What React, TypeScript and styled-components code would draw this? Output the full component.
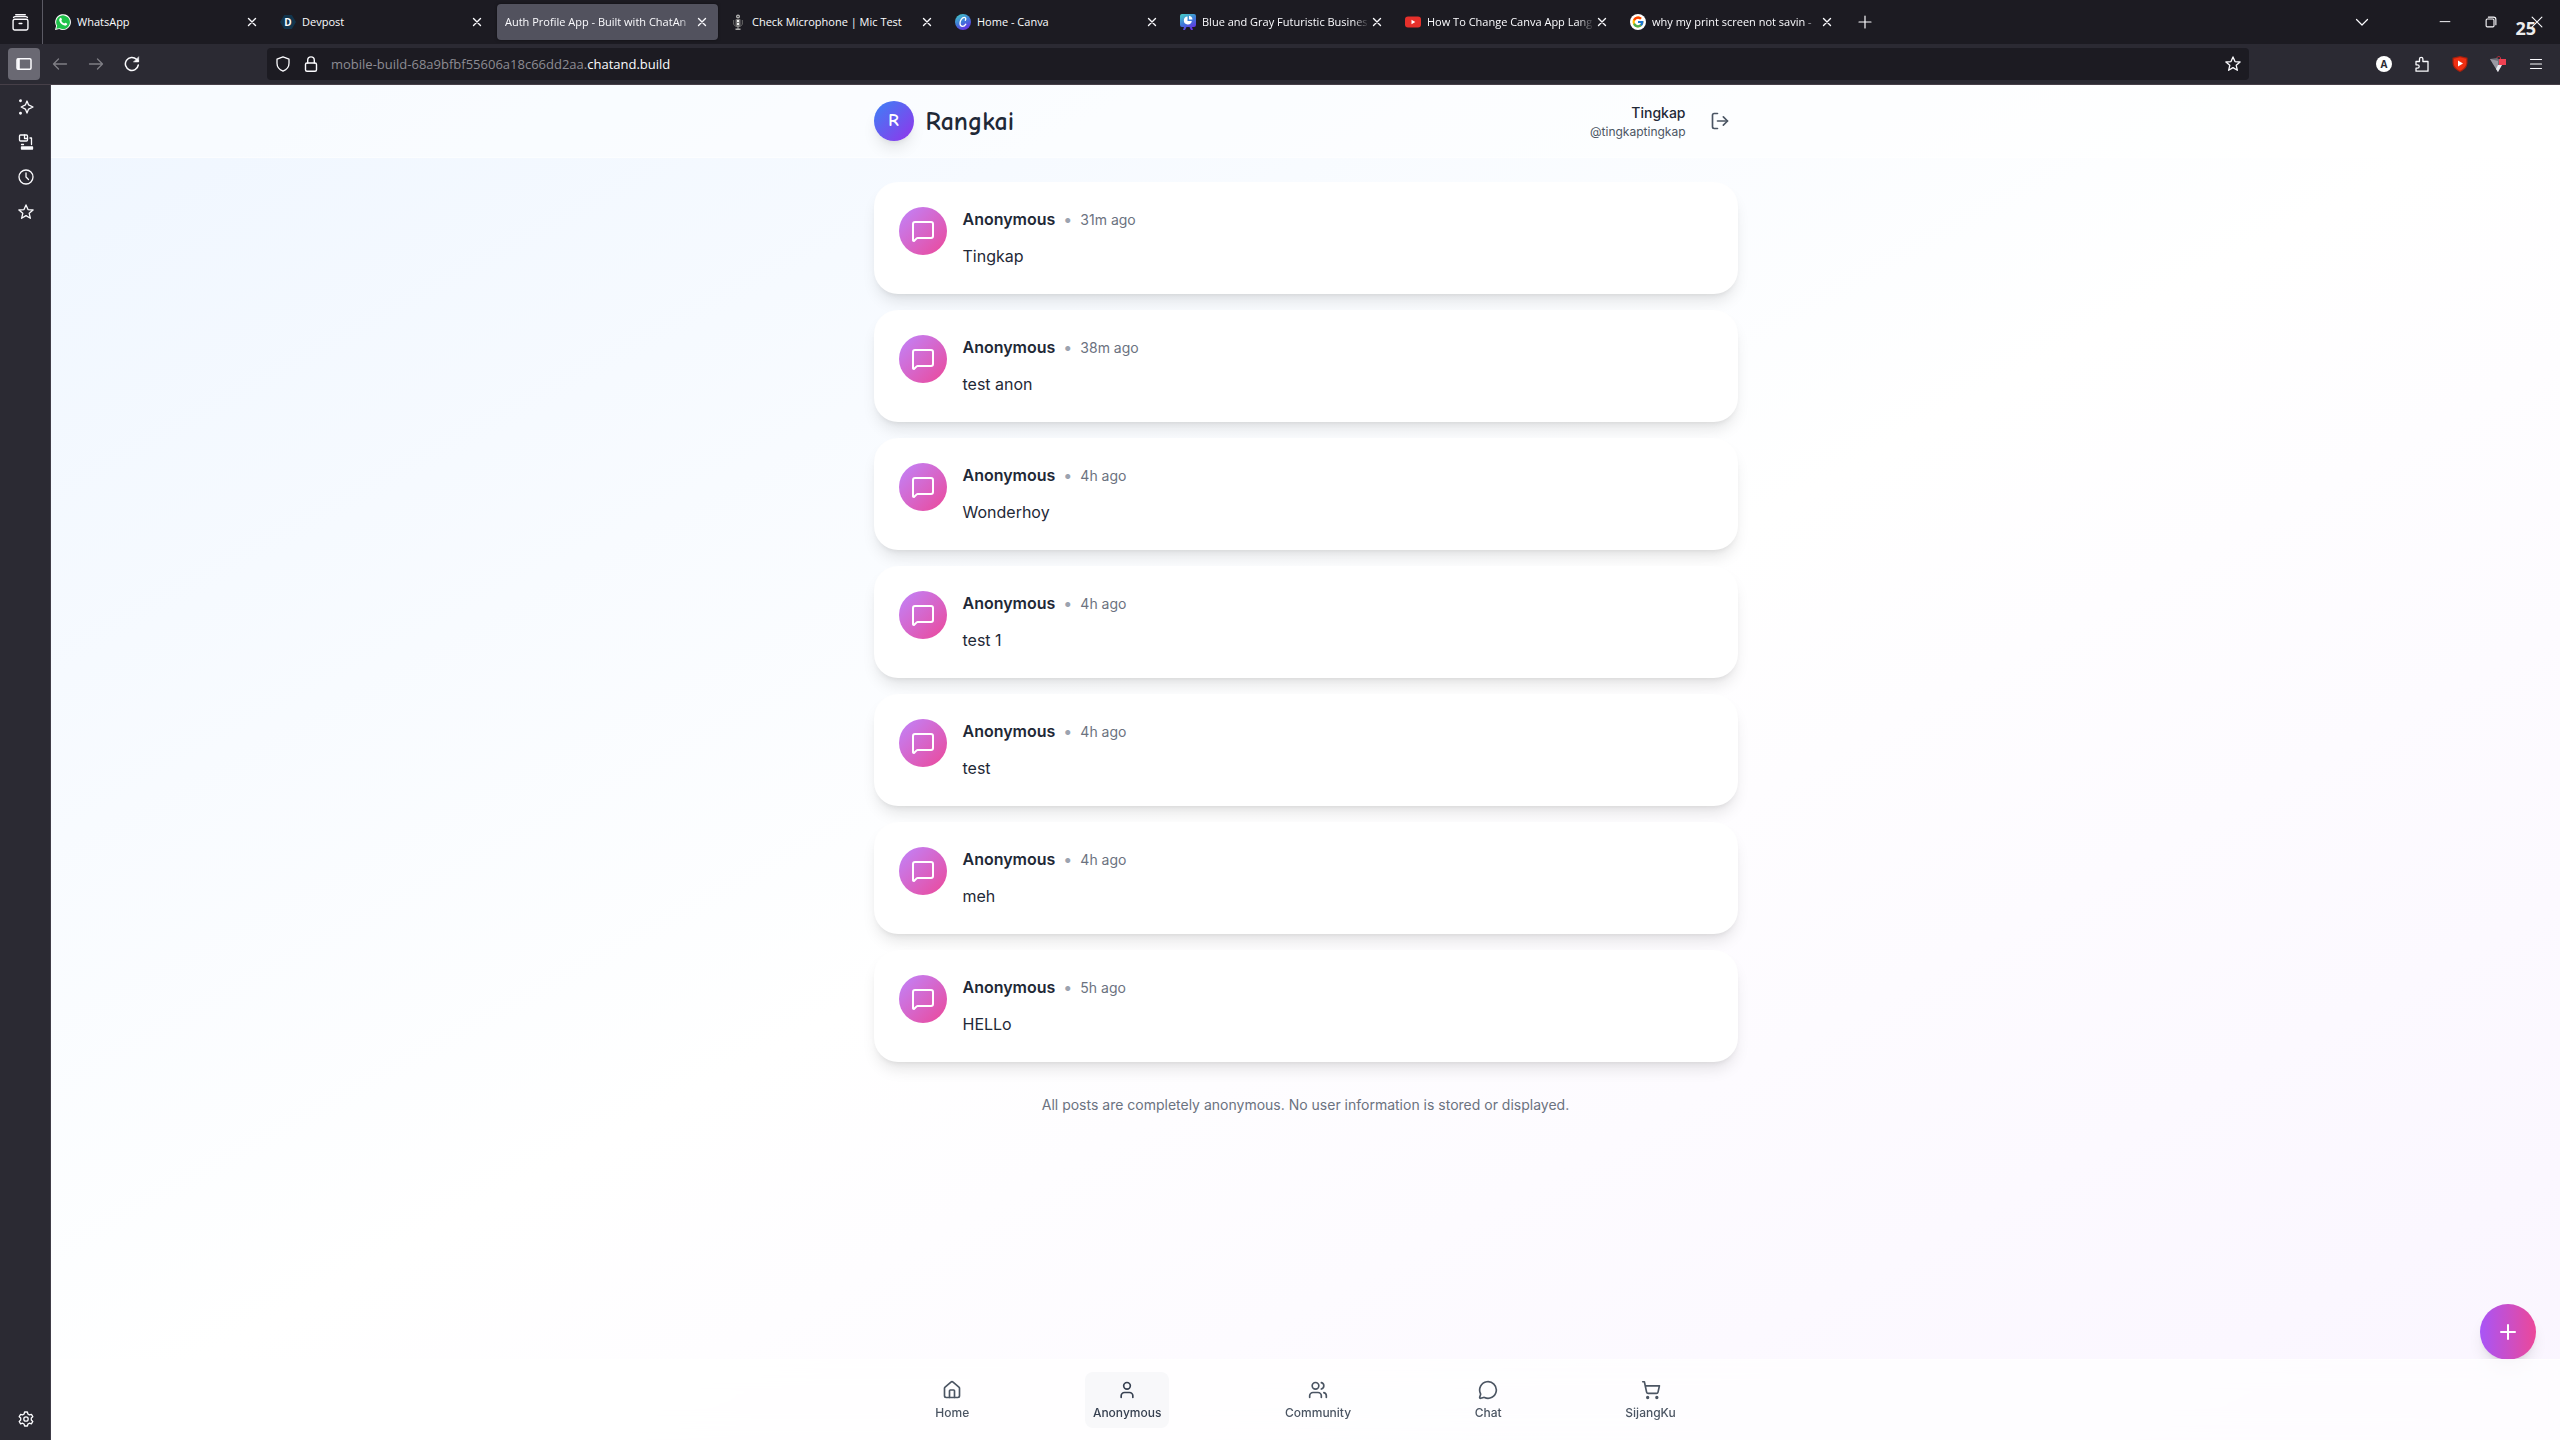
import React from "react";
import styled, { createGlobalStyle, css } from "styled-components";
import {
  House,
  LogOut,
  MessageCircle,
  MessageSquare,
  Plus,
  ShoppingCart,
  User,
  Users,
  type LucideIcon,
} from "lucide-react";
import { FcGoogle } from "react-icons/fc";

const GlobalStyle = createGlobalStyle`
  *, *::before, *::after { box-sizing: border-box; }
  body { margin: 0; }
  button, input { font: inherit; color: inherit; }
  button { border: 0; padding: 0; background: none; cursor: pointer; }
  a { color: inherit; text-decoration: none; }
  h1, p { margin: 0; }
  svg { display: block; flex: none; }
`;

const chromeFont = `"Segoe UI", "Open Sans", "Noto Sans", sans-serif`;
const pageFont = `Inter, Roboto, sans-serif`;
const logoFont = `"Comic Sans MS", "Comic Neue", Lato, sans-serif`;

/* ---------- browser window ---------- */

const Window = styled.div`
  height: 100vh;
  display: flex;
  flex-direction: column;
  overflow: hidden;
  font-family: ${chromeFont};
  color: #fbfbfe;
`;

const TabBar = styled.header`
  position: relative;
  flex: none;
  display: flex;
  align-items: center;
  height: 44px;
  background: #1c1b22;
`;

const ViewButton = styled.button`
  width: 40px;
  height: 44px;
  display: grid;
  place-items: center;
`;

const Divider = styled.span`
  width: 1px;
  height: 44px;
  margin: 0 4px 0 2px;
  background: #5b5a64;
`;

const TabList = styled.div`
  flex: 0 1 auto;
  min-width: 0;
  display: flex;
  gap: 4px;
`;

const TabItem = styled.div<{ $active?: boolean }>`
  flex: 0 1 221px;
  width: 221px;
  min-width: 0;
  height: 36px;
  padding: 0 8px;
  display: flex;
  align-items: center;
  border-radius: 4px;
  ${(p) =>
    p.$active &&
    css`
      background: #52525e;
      box-shadow: 0 0 3px rgba(0, 0, 0, 0.5);
    `}
`;

const TabLabel = styled.button<{ $fade?: boolean }>`
  flex: 1;
  min-width: 0;
  height: 36px;
  display: flex;
  align-items: center;
  gap: 6px;
  overflow: hidden;
  font-size: 11px;
  line-height: 16px;
  white-space: nowrap;
  ${(p) =>
    p.$fade &&
    css`
      mask-image: linear-gradient(to left, transparent, #000 16px);
    `}
`;

const TabClose = styled.button`
  width: 16px;
  height: 16px;
  display: grid;
  place-items: center;
`;

const NewTab = styled.button`
  width: 32px;
  height: 32px;
  margin-left: 6px;
  display: grid;
  place-items: center;
`;

const WindowControls = styled.div`
  margin-left: auto;
  display: flex;
  align-items: center;
`;

const WindowButton = styled.button<{ $gap?: boolean }>`
  width: 46px;
  height: 44px;
  margin-right: ${(p) => (p.$gap ? 37 : 0)}px;
  display: grid;
  place-items: center;
`;

const FrameCounter = styled.span`
  position: absolute;
  right: 24px;
  top: 16px;
  font: 700 18px/24px "Open Sans", sans-serif;
  color: #ececec;
  pointer-events: none;
`;

const Toolbar = styled.div`
  flex: none;
  display: flex;
  align-items: center;
  height: 41px;
  padding: 0 6px 0 8px;
  background: #2b2a33;
  border-bottom: 1px solid #463f48;
`;

const ToolButton = styled.button<{ $on?: boolean; $dim?: boolean }>`
  width: ${(p) => (p.$on ? 32 : 36)}px;
  height: 32px;
  margin-right: ${(p) => (p.$on ? 2 : 0)}px;
  display: grid;
  place-items: center;
  border-radius: 4px;
  background: ${(p) => (p.$on ? "#6a6973" : "none")};
  opacity: ${(p) => (p.$dim ? 0.4 : 1)};
`;

const UrlBar = styled.form`
  position: relative;
  flex: 1;
  min-width: 0;
  height: 32px;
  margin: 0 117px;
  padding: 0 8px;
  display: flex;
  align-items: center;
  gap: 12px;
  border-radius: 4px;
  background: #1c1b22;
`;

const UrlText = styled.span`
  flex: 1;
  min-width: 0;
  overflow: hidden;
  white-space: nowrap;
  font-size: 13px;
  line-height: 20px;
  color: #8d8c93;
`;

const UrlHost = styled.span`
  color: #fbfbfe;
`;

const UrlInput = styled.input`
  position: absolute;
  inset: 0 40px 0 64px;
  border: 0;
  outline: 0;
  background: transparent;
`;

const Extensions = styled.div`
  display: flex;
  gap: 2px;
`;

const Body = styled.div`
  flex: 1;
  min-height: 0;
  display: flex;
`;

const SideBar = styled.aside`
  flex: none;
  width: 51px;
  padding: 4px 6px 4px 8px;
  display: flex;
  flex-direction: column;
  align-items: center;
  background: #2b2a33;
  border-right: 1px solid #403d48;
`;

const SideButton = styled.button<{ $last?: boolean }>`
  width: 36px;
  height: 35px;
  display: grid;
  place-items: center;
  margin-top: ${(p) => (p.$last ? "auto" : 0)};
`;

/* ---------- page ---------- */

const Page = styled.div`
  position: relative;
  flex: 1;
  min-width: 0;
  display: flex;
  flex-direction: column;
  background: linear-gradient(to bottom right, #eff6ff, #ffffff, #faf5ff);
  font-family: ${pageFont};
  color: #1f2937;
`;

const PageHeader = styled.header`
  flex: none;
  background: rgba(255, 255, 255, 0.5);
  border-bottom: 1px solid rgba(255, 255, 255, 0.5);
`;

const HeaderInner = styled.div`
  max-width: 896px;
  margin: 0 auto;
  padding: 16px;
  display: flex;
  align-items: center;
  justify-content: space-between;
`;

const Brand = styled.div`
  height: 40px;
  display: flex;
  align-items: center;
  gap: 12px;
  font-family: ${logoFont};
  font-weight: 700;
`;

const BrandMark = styled.span`
  width: 40px;
  height: 40px;
  display: grid;
  place-items: center;
  border-radius: 50%;
  background: linear-gradient(to bottom right, #3b82f6, #9333ea);
  box-shadow: 0 10px 15px -3px rgba(0, 0, 0, 0.1), 0 4px 6px -4px rgba(0, 0, 0, 0.1);
  color: #fff;
  font-size: 18px;
  line-height: 28px;
`;

const BrandName = styled.h1`
  padding-top: 2px;
  font-size: 26px;
  line-height: 32px;
  font-weight: 700;
`;

const Account = styled.div`
  height: 40px;
  display: flex;
  align-items: center;
  gap: 16px;
  text-align: right;
`;

const AccountName = styled.p`
  font-size: 14px;
  line-height: 22px;
  font-weight: 500;
`;

const AccountHandle = styled.p`
  font-size: 12px;
  line-height: 16px;
  color: #4b5563;
`;

const LogoutButton = styled.button`
  width: 36px;
  height: 36px;
  display: grid;
  place-items: center;
  color: #4b5563;
`;

const Main = styled.main`
  flex: 1;
  min-height: 0;
  width: 100%;
  max-width: 896px;
  margin: 0 auto;
  padding: 24px 16px;
`;

const Posts = styled.div`
  display: flex;
  flex-direction: column;
  gap: 16px;
`;

const Card = styled.article`
  display: flex;
  gap: 16px;
  padding: 24px;
  border: 1px solid rgba(255, 255, 255, 0.5);
  border-radius: 24px;
  background: #fff;
  box-shadow: 0 10px 15px -3px rgba(0, 0, 0, 0.1), 0 4px 6px -4px rgba(0, 0, 0, 0.1);
`;

const PostIcon = styled.span`
  flex: none;
  width: 48px;
  height: 48px;
  display: grid;
  place-items: center;
  border-radius: 50%;
  background: linear-gradient(to bottom right, #c084fc, #ec4899);
  color: #fff;
`;

const PostMeta = styled.div`
  display: flex;
  align-items: baseline;
  gap: 8px;
  margin-bottom: 12px;
  font-size: 16px;
  line-height: 24px;
`;

const Author = styled.span`
  font-weight: 600;
`;

const Dot = styled.span`
  color: #9ca3af;
`;

const PostAge = styled.span`
  font-size: 14px;
  line-height: 20px;
  color: #6b7280;
`;

const PostBody = styled.p`
  font-size: 16px;
  line-height: 26px;
`;

const Notice = styled.p`
  margin-top: 32px;
  text-align: center;
  font-size: 14px;
  line-height: 22px;
  color: #6b7280;
`;

const AddButton = styled.button`
  position: absolute;
  right: 24px;
  bottom: 80px;
  width: 56px;
  height: 56px;
  display: grid;
  place-items: center;
  border-radius: 50%;
  background: linear-gradient(to right, #a855f7, #ec4899);
  box-shadow: 0 10px 15px -3px rgba(0, 0, 0, 0.1), 0 4px 6px -4px rgba(0, 0, 0, 0.1);
  color: #fff;
`;

const BottomNav = styled.nav`
  position: relative;
  z-index: 1;
  flex: none;
  background: rgba(255, 255, 255, 0.7);
  border-top: 1px solid rgba(255, 255, 255, 0.5);
  backdrop-filter: blur(12px);
`;

const NavInner = styled.div`
  max-width: 896px;
  margin: 0 auto;
  padding: 12px 16px;
  display: flex;
  justify-content: space-around;
`;

const NavLink = styled.a<{ $active?: boolean }>`
  display: flex;
  flex-direction: column;
  align-items: center;
  gap: 4px;
  padding: 8px 8px 6px;
  border-radius: 8px;
  font-size: 12px;
  line-height: 18px;
  font-weight: 500;
  color: ${(p) => (p.$active ? "#374151" : "#4b5563")};
  background: ${(p) => (p.$active ? "#f8f8fa" : "none")};
`;

/* ---------- drawings ---------- */

type GlyphProps = { size?: number; width?: number; children: React.ReactNode };

const Glyph = ({ size = 16, width = 1.3, children }: GlyphProps) => (
  <svg
    width={size}
    height={size}
    viewBox="0 0 16 16"
    fill="none"
    stroke="currentColor"
    strokeWidth={width}
    strokeLinecap="round"
    strokeLinejoin="round"
    aria-hidden="true"
  >
    {children}
  </svg>
);

const starPath =
  "M8 .9l2 4.7 5.1.4-3.9 3.3 1.2 5-4.4-2.7-4.4 2.7 1.2-5L.9 6 6 5.6z";

const CloseGlyph = () => (
  <Glyph width={1.4}>
    <path d="M4.5 4.5l7 7M11.5 4.5l-7 7" />
  </Glyph>
);

const WhatsAppLogo = () => (
  <svg width="16" height="16" viewBox="0 0 16 16" aria-hidden="true">
    <path d="M0 16l1.1-4.1A7.9 7.9 0 1 1 4.2 15z" fill="#fff" />
    <path d="M1.3 14.7l.8-2.9a6.9 6.9 0 1 1 2.6 2.5z" fill="#1fc24a" />
    <path
      d="M5.2 4c.4-.4.9-.3 1.1.1l.6 1.4c.1.3 0 .5-.6 1.2.7 1.4 1.6 2.2 3 2.8.7-.8.8-1 1.2-.8l1.5.7c.3.2.3.5.1 1.1-.5 1.1-1.7 1.3-2.7 1C6.9 10.8 5 8.900 4.400 7c-.4-1.200 0-2.300.8-3z"
      fill="#fff"
    />
  </svg>
);

const BadgeText = styled.text`
  font: 700 10px "Open Sans", sans-serif;
  text-anchor: middle;
`;

const DevpostLogo = () => (
  <svg width="16" height="16" viewBox="0 0 16 16" aria-hidden="true">
    <path d="M4.2 1h7.6L16 8l-4.2 7H4.2L0 8z" fill="#12354d" />
    <BadgeText x="8" y="11.6" fill="#fff">D</BadgeText>
  </svg>
);

const MicLogo = () => (
  <svg width="16" height="16" viewBox="0 0 16 16" aria-hidden="true">
    <circle cx="8" cy="2.5" r="2" fill="#b9b9b9" />
    <circle cx="8" cy="2.5" r=".8" fill="#333" />
    <path d="M3.7 6v4.500L6 12.500h4l2.300-2V6" fill="none" stroke="#6c6c6c" />
    <rect x="5.5" y="5" width="5" height="7" rx="1" fill="#777" />
    <path d="M7 6h2v2H7zM7 9h2v2H7z" fill="#eee" />
    <path d="M7.500 12h1v2.500h-1zM5.500 14.500h5V16h-5z" fill="#aaa" />
  </svg>
);

const CanvaGradient = ({ id }: { id: string }) => (
  <defs>
    <linearGradient id={id} x1="0.2" y1="0" x2="0.7" y2="1">
      <stop offset="0" stopColor="#45c6c8" />
      <stop offset="0.5" stopColor="#3f79d8" />
      <stop offset="1" stopColor="#6a2be4" />
    </linearGradient>
  </defs>
);

const CanvaLogo = () => (
  <svg width="16" height="16" viewBox="0 0 16 16" aria-hidden="true">
    <CanvaGradient id="canva-home" />
    <circle cx="8" cy="8" r="8" fill="url(#canva-home)" />
    <path
      d="M10.300 6.200c.9-1 .5-2.800-.9-2.800C7 3.400 5 6.600 5 9.300c0 1.900 1 3.100 2.500 3.100 1.500 0 2.600-1 3.300-2.200"
      fill="none"
      stroke="#fff"
      strokeWidth="1.3"
      strokeLinecap="round"
    />
  </svg>
);

const CanvaDeckLogo = () => (
  <svg width="16" height="16" viewBox="0 0 16 16" aria-hidden="true">
    <CanvaGradient id="canva-deck" />
    <path
      d="M2 0h12a2 2 0 0 1 2 2v9a2 2 0 0 1-2 2h-2l1 3h-2l-1.500-3h-3L5 16H3l1-3H2a2 2 0 0 1-2-2V2a2 2 0 0 1 2-2z"
      fill="url(#canva-deck)"
    />
    <path d="M7.500 2.500A4 4 0 1 0 11.800 7H7.500z" fill="#fff" />
    <path d="M9 1.800a4 4 0 0 1 3.500 3.700H9z" fill="#fff" />
  </svg>
);

const YouTubeLogo = () => (
  <svg width="16" height="16" viewBox="0 0 16 16" aria-hidden="true">
    <rect y="2.5" width="16" height="11" rx="3" fill="#e6302b" />
    <path d="M6.500 5.700v4.600L10.300 8z" fill="#fff" />
  </svg>
);

const GoogleLogo = () => (
  <svg width="16" height="16" viewBox="0 0 16 16" aria-hidden="true">
    <circle cx="8" cy="8" r="8" fill="#fff" />
    <FcGoogle x="1.5" y="1.5" size={13} />
  </svg>
);

const VideoShield = () => (
  <svg width="16" height="16" viewBox="0 0 16 16" aria-hidden="true">
    <path d="M8 0l7.500 1.800v4.700c0 4.500-3 7.500-7.500 9.500C3.500 14 .5 11 .5 6.500V1.800z" fill="#a8200d" />
    <path d="M8 1.200l6.300 1.500v3.800c0 3.800-2.500 6.400-6.300 8.200-3.800-1.800-6.300-4.400-6.300-8.200V2.700z" fill="#ee2f12" />
    <path d="M6 4.500v6L11 7.500z" fill="#fff" />
  </svg>
);

const LockedPrism = () => (
  <svg width="16" height="16" viewBox="0 0 16 16" aria-hidden="true">
    <path d="M0 3l7-1 6 4-5 10z" fill="#6f6e78" />
    <path d="M0 3l8 2 0 11z" fill="#9a99a3" />
    <path d="M8 9h4L8 16l-2-3z" fill="#e8e8ee" />
    <path d="M7 2c0-2 3.500-2 3.500 0v2" fill="none" stroke="#c7303e" />
    <rect x="9" y="3" width="7" height="6" fill="#ee4152" />
  </svg>
);

/* ---------- content ---------- */

type TabData = { title: string; icon?: React.ReactNode; active?: boolean; fade?: boolean };

const tabs: TabData[] = [
  { title: "WhatsApp", icon: <WhatsAppLogo /> },
  { title: "Devpost", icon: <DevpostLogo /> },
  { title: "Auth Profile App - Built with ChatAn", active: true, fade: true },
  { title: "Check Microphone | Mic Test", icon: <MicLogo /> },
  { title: "Home - Canva", icon: <CanvaLogo /> },
  { title: "Blue and Gray Futuristic Busines", icon: <CanvaDeckLogo />, fade: true },
  { title: "How To Change Canva App Lang", icon: <YouTubeLogo />, fade: true },
  { title: "why my print screen not savin -", icon: <GoogleLogo />, fade: true },
];

const posts = [
  { age: "31m ago", text: "Tingkap" },
  { age: "38m ago", text: "test anon" },
  { age: "4h ago", text: "Wonderhoy" },
  { age: "4h ago", text: "test 1" },
  { age: "4h ago", text: "test" },
  { age: "4h ago", text: "meh" },
  { age: "5h ago", text: "HELLo" },
];

const navItems: { label: string; Icon: LucideIcon; active?: boolean }[] = [
  { label: "Home", Icon: House },
  { label: "Anonymous", Icon: User, active: true },
  { label: "Community", Icon: Users },
  { label: "Chat", Icon: MessageCircle },
  { label: "SijangKu", Icon: ShoppingCart },
];

const Tabs = () => (
  <TabBar>
    <ViewButton aria-label="Recent browsing">
      <Glyph size={17}>
        <rect x="1" y="5" width="14" height="10" rx="1.5" />
        <path d="M1.500 3.200C2 2.500 2.500 2.500 3 2.500h10c.5 0 1 0 1.500.7M3.500.7h9M6.700 9h2.600" />
      </Glyph>
    </ViewButton>
    <Divider />
    <TabList>
      {tabs.map((tab) => (
        <TabItem key={tab.title} $active={tab.active}>
          <TabLabel $fade={tab.fade}>
            {tab.icon}
            {tab.title}
          </TabLabel>
          <TabClose aria-label={`Close ${tab.title}`}>
            <CloseGlyph />
          </TabClose>
        </TabItem>
      ))}
    </TabList>
    <NewTab aria-label="New tab">
      <Glyph width={1.2}>
        <path d="M8 2v12M2 8h12" />
      </Glyph>
    </NewTab>
    <WindowControls>
      <WindowButton $gap aria-label="List all tabs">
        <Glyph width={1.2}>
          <path d="M2.500 5.500L8 11l5.500-5.500" />
        </Glyph>
      </WindowButton>
      <WindowButton aria-label="Minimize">
        <Glyph size={12} width={1.3}>
          <path d="M1.500 7.500h13" />
        </Glyph>
      </WindowButton>
      <WindowButton aria-label="Restore">
        <Glyph size={12} width={1.5}>
          <rect x="1.5" y="4" width="10.5" height="10.5" rx="1.5" />
          <path d="M4.500 1.500h7c2 0 3 1 3 3v7" />
        </Glyph>
      </WindowButton>
      <WindowButton aria-label="Close window">
        <Glyph size={12} width={1.5}>
          <path d="M1.500 1.500l13 13M14.500 1.500l-13 13" />
        </Glyph>
      </WindowButton>
    </WindowControls>
    <FrameCounter>25</FrameCounter>
  </TabBar>
);

const NavigationBar = () => (
  <Toolbar>
    <ToolButton $on aria-label="Sidebar">
      <Glyph width={1.5}>
        <rect x="1" y="2.7" width="14" height="10.6" rx="1.2" />
        <path d="M2.500 3.500v9" strokeWidth="2.6" />
      </Glyph>
    </ToolButton>
    <ToolButton $dim aria-label="Back">
      <Glyph>
        <path d="M14.500 8h-13M6.500 3l-5 5 5 5" />
      </Glyph>
    </ToolButton>
    <ToolButton $dim aria-label="Forward">
      <Glyph>
        <path d="M1.500 8h13M9.500 3l5 5-5 5" />
      </Glyph>
    </ToolButton>
    <ToolButton aria-label="Reload">
      <Glyph width={1.5}>
        <path d="M14.300 9A6.500 6.500 0 1 1 12.500 3.300L14.300 5" />
        <path d="M14.700 1v5h-5z" fill="currentColor" strokeWidth=".5" />
      </Glyph>
    </ToolButton>
    <UrlBar onSubmit={(e) => e.preventDefault()}>
      <Glyph>
        <path d="M8 .8l6 2.400v4c0 3.600-2.500 6.500-6 8-3.500-1.500-6-4.400-6-8v-4z" />
      </Glyph>
      <Glyph width={1.4}>
        <rect x="2.5" y="7" width="11" height="8.2" rx="1.5" />
        <path d="M4.700 7V4.200a3.300 3.300 0 0 1 6.600 0V7" />
      </Glyph>
      <UrlText>
        mobile-build-68a9bfbf55606a18c66dd2aa.<UrlHost>chatand.build</UrlHost>
      </UrlText>
      <UrlInput type="text" aria-label="Search or enter address" />
      <Glyph>
        <path d={starPath} />
      </Glyph>
    </UrlBar>
    <Extensions>
      <ToolButton aria-label="Account">
        <svg width="16" height="16" viewBox="0 0 16 16" aria-hidden="true">
          <circle cx="8" cy="8" r="8" fill="#fff" />
          <BadgeText x="8" y="11.6" fill="#2b2a33">A</BadgeText>
        </svg>
      </ToolButton>
      <ToolButton aria-label="Extensions">
        <Glyph>
          <path d="M2 5.500h3.500V3a1.700 1.700 0 0 1 3.400 0v2.500H14v9.700H2v-3h1.500a1.700 1.700 0 0 0 0-3.400H2z" />
        </Glyph>
      </ToolButton>
      <ToolButton aria-label="Video shield">
        <VideoShield />
      </ToolButton>
      <ToolButton aria-label="Privacy filter">
        <LockedPrism />
      </ToolButton>
      <ToolButton aria-label="Open application menu">
        <Glyph width={1.2}>
          <path d="M2.500 3.500h11M2.500 8h11M2.500 12.500h11" />
        </Glyph>
      </ToolButton>
    </Extensions>
  </Toolbar>
);

const BrowserSideBar = () => (
  <SideBar>
    <SideButton aria-label="Chatbot">
      <Glyph>
        <path d="M9 2l1.600 3.900L15 8l-4.400 2.100L9 14l-1.600-3.900L3.200 8l4.200-2.100z" />
        <circle cx="2.5" cy="1.8" r=".8" fill="currentColor" />
        <circle cx="2.5" cy="14.2" r=".8" fill="currentColor" />
      </Glyph>
    </SideButton>
    <SideButton aria-label="Synced tabs">
      <Glyph>
        <rect x="1.5" y="1" width="8" height="6" rx="1" />
        <path d="M6.500 1v3.500h3M12 4h1.500v6.500M3.500 10.500h2" />
        <path d="M3.500 13h11v2h-11z" fill="currentColor" />
      </Glyph>
    </SideButton>
    <SideButton aria-label="History">
      <Glyph>
        <circle cx="8" cy="8" r="7" />
        <path d="M8 4v4l2.500 2.500" />
      </Glyph>
    </SideButton>
    <SideButton aria-label="Bookmarks">
      <Glyph>
        <path d={starPath} />
      </Glyph>
    </SideButton>
    <SideButton $last aria-label="Customize sidebar">
      <Glyph>
        <path d="M6.600 1h2.800l.5 2 1.500.9 2-.6 1.400 2.400L13.300 7v2l1.500 1.400-1.400 2.400-2-.6-1.500.9-.5 1.900H6.600l-.5-1.900-1.500-.9-2 .6-1.400-2.400L2.700 9V7L1.200 5.700l1.400-2.400 2 .6L6.100 3z" />
        <circle cx="8" cy="8" r="2.2" />
      </Glyph>
    </SideButton>
  </SideBar>
);

export default function App() {
  return (
    <Window>
      <GlobalStyle />
      <Tabs />
      <NavigationBar />
      <Body>
        <BrowserSideBar />
        <Page>
          <PageHeader>
            <HeaderInner>
              <Brand>
                <BrandMark>R</BrandMark>
                <BrandName>Rangkai</BrandName>
              </Brand>
              <Account>
                <div>
                  <AccountName>Tingkap</AccountName>
                  <AccountHandle>@tingkaptingkap</AccountHandle>
                </div>
                <LogoutButton aria-label="Log out">
                  <LogOut size={20} />
                </LogoutButton>
              </Account>
            </HeaderInner>
          </PageHeader>
          <Main>
            <Posts>
              {posts.map((post) => (
                <Card key={post.text}>
                  <PostIcon>
                    <MessageSquare size={24} />
                  </PostIcon>
                  <div>
                    <PostMeta>
                      <Author>Anonymous</Author>
                      <Dot>•</Dot>
                      <PostAge>{post.age}</PostAge>
                    </PostMeta>
                    <PostBody>{post.text}</PostBody>
                  </div>
                </Card>
              ))}
            </Posts>
            <Notice>
              All posts are completely anonymous. No user information is stored or displayed.
            </Notice>
          </Main>
          <AddButton aria-label="New post">
            <Plus size={24} />
          </AddButton>
          <BottomNav>
            <NavInner>
              {navItems.map(({ label, Icon, active }) => (
                <NavLink key={label} href={`#${label.toLowerCase()}`} $active={active}>
                  <Icon size={20} />
                  {label}
                </NavLink>
              ))}
            </NavInner>
          </BottomNav>
        </Page>
      </Body>
    </Window>
  );
}
